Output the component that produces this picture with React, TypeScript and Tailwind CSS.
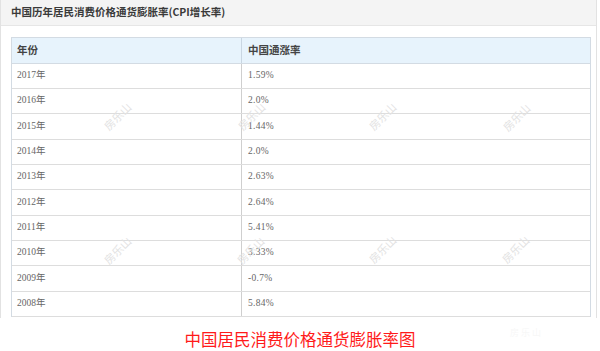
import React from "react";

const rows: [string, string, number][] = [
  ["2017年", "1.59%", 25],
  ["2016年", "2.0%", 25],
  ["2015年", "1.44%", 26],
  ["2014年", "2.0%", 25],
  ["2013年", "2.63%", 25],
  ["2012年", "2.64%", 26],
  ["2011年", "5.41%", 25],
  ["2010年", "3.33%", 25],
  ["2009年", "-0.7%", 26],
  ["2008年", "5.84%", 25],
];

const marks: [number, number][] = [
  [118, 117],
  [252, 117],
  [383, 117],
  [517, 118],
  [118, 251],
  [251, 251],
  [383, 250],
  [516, 250],
];

const cjk = '"Noto Sans CJK SC", sans-serif';
const cell = '"Liberation Serif", "Noto Sans CJK SC", serif';

export default function App() {
  return (
    <div className="relative w-[600px] h-[351px] bg-white overflow-hidden" style={{ fontFamily: cjk }}>
      <div className="w-[597px] h-[318px] border-l border-r border-[#e2e2e2]">
        <div className="h-[26px] bg-[#f4f4f4] border-b border-[#e6e6e6] flex items-center pl-[10px] text-[10.5px] font-bold text-[#3a3a3a] leading-none">
          中国历年居民消费价格通货膨胀率(CPI增长率)
        </div>
        <div className="pt-[11px] pl-[10px]">
          <div className="w-[580px] border-l border-r border-t border-[#d3dbe3]">
            <div className="flex h-[26px] bg-[#e7f3fc] border-b border-[#d3dbe3] text-[10.5px] font-bold text-[#444] leading-none">
              <div className="w-[230px] border-r border-[#c9d6e2] flex items-center pl-[5px]">年份</div>
              <div className="flex-1 flex items-center pl-[6px]">中国通涨率</div>
            </div>
            {rows.map(([y, v, h]) => (
              <div
                key={y}
                className={`flex border-b border-[#dddddd] text-[9.5px] text-[#666] leading-none ${h === 26 ? "h-[26px]" : "h-[25px]"}`}
                style={{ fontFamily: cell }}
              >
                <div className="w-[230px] border-r border-[#cfcfcf] flex items-center pl-[5px]">{y}</div>
                <div className="flex-1 flex items-center pl-[6px] tracking-[0.3px]">{v}</div>
              </div>
            ))}
          </div>
        </div>
      </div>
      <div className="flex justify-center pt-[11px] text-[16.5px] leading-[20px] text-[#ff1a1a]">
        中国居民消费价格通货膨胀率图
      </div>
      {marks.map(([x, y], i) => (
        <div
          key={i}
          className="absolute text-[11px] leading-none text-[#e2e2e2] -rotate-45 whitespace-nowrap pointer-events-none"
          style={{ left: x - 17, top: y - 6 }}
        >
          房乐山
        </div>
      ))}
      <div className="absolute left-[510px] top-[328px] text-[9px] leading-none text-[#f7f7f7] tracking-[2px]">
        房乐山
      </div>
    </div>
  );
}
